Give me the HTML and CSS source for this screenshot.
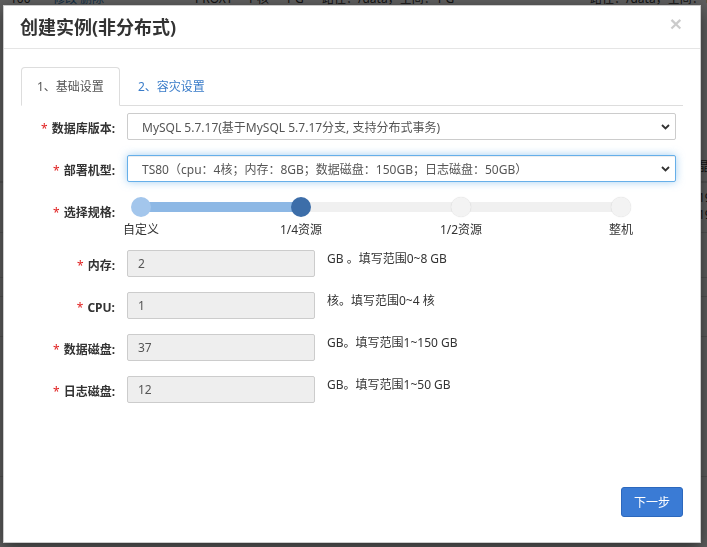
FILE: index.html
```html
<!DOCTYPE html>
<html lang="zh-CN">
<head>
<meta charset="utf-8">
<title>创建实例</title>
<link rel="stylesheet" href="styles.css">
</head>
<body>
<div class="page">
  <div class="bg-row">
    <span></span><span>100</span><span class="bg-link">修改 删除</span><span>PROXY</span><span>1 核</span><span>1 G</span><span>路径：/data，空间：1 G</span><span>路径：/data，空间：1 G</span>
  </div>
  <div class="bg-line bg-a"></div>
  <div class="bg-line bg-b"><span class="bg-edge">晶体</span></div>
  <div class="bg-line bg-c"><span class="bg-edge">192.168</span><span class="bg-edge">192.168</span></div>
  <div class="bg-line bg-d"></div>
  <div class="bg-line bg-e"></div>
  <div class="bg-line bg-f"></div>
  <div class="bg-line bg-g"></div>
</div>
<div class="backdrop"></div>

<div class="modal">
  <div class="modal-header">
    <h4 class="title">创建实例(非分布式)</h4>
    <span class="close">×</span>
  </div>
  <div class="modal-body">
    <ul class="tabs">
      <li class="tab active">1、基础设置</li>
      <li class="tab">2、容灾设置</li>
    </ul>
    <div class="form">
      <div class="row">
        <label class="label"><span class="req">*</span>数据库版本:</label>
        <div class="select">
          <span class="select-text">MySQL 5.7.17(基于MySQL 5.7.17分支, 支持分布式事务)</span>
          <svg class="chev" width="9" height="6" viewBox="0 0 9 6"><path d="M1 1 L4.5 4.5 L8 1" fill="none" stroke="#333" stroke-width="1.8"/></svg>
        </div>
      </div>
      <div class="row">
        <label class="label"><span class="req">*</span>部署机型:</label>
        <div class="select focus">
          <span class="select-text">TS80（cpu：4核；内存：8GB；数据磁盘：150GB；日志磁盘：50GB）</span>
          <svg class="chev" width="9" height="6" viewBox="0 0 9 6"><path d="M1 1 L4.5 4.5 L8 1" fill="none" stroke="#333" stroke-width="1.8"/></svg>
        </div>
      </div>
      <div class="row row-slider">
        <label class="label"><span class="req">*</span>选择规格:</label>
        <div class="slider">
          <div class="track"><div class="fill" style="width:33.333%"></div></div>
          <div class="handles">
            <span class="handle done"></span>
            <span class="handle current"></span>
            <span class="handle"></span>
            <span class="handle"></span>
          </div>
          <div class="ticks">
            <span class="tick">自定义</span>
            <span class="tick">1/4资源</span>
            <span class="tick">1/2资源</span>
            <span class="tick">整机</span>
          </div>
        </div>
      </div>
      <div class="row">
        <label class="label"><span class="req">*</span>内存:</label>
        <input class="input" value="2" readonly>
        <span class="hint">GB 。填写范围0~8 GB</span>
      </div>
      <div class="row">
        <label class="label"><span class="req">*</span>CPU:</label>
        <input class="input" value="1" readonly>
        <span class="hint">核。填写范围0~4 核</span>
      </div>
      <div class="row">
        <label class="label"><span class="req">*</span>数据磁盘:</label>
        <input class="input" value="37" readonly>
        <span class="hint">GB。填写范围1~150 GB</span>
      </div>
      <div class="row">
        <label class="label"><span class="req">*</span>日志磁盘:</label>
        <input class="input" value="12" readonly>
        <span class="hint">GB。填写范围1~50 GB</span>
      </div>
    </div>
  </div>
  <div class="modal-footer">
    <button class="btn" type="button">下一步</button>
  </div>
</div>
</body>
</html>
```
FILE: styles.css
```css
* { box-sizing: border-box; }
html, body { margin: 0; height: 100%; }
body {
  font-family: "Noto Sans", "Noto Sans CJK SC", sans-serif;
  font-size: 12px;
  color: #333;
  background: #fff;
  overflow: hidden;
}

/* background page behind the dialog */
.page { color: #333; }
.bg-row {
  display: grid;
  grid-template-columns: 10px 43px 142px 52px 38px 37px 268px 1fr;
  line-height: 17px;
  height: 17px;
  margin-top: -10px;
  white-space: nowrap;
}
.bg-link { color: #337ab7; }
.bg-line { border-bottom: 1px solid #ddd; position: relative; }
.bg-a { height: 175px; }
.bg-b { height: 25px; padding-top: 0; }
.bg-c { height: 50px; padding-top: 6px; }
.bg-d { height: 45px; }
.bg-e { height: 19px; }
.bg-f { height: 40px; }
.bg-g { height: 140px; }
.bg-edge { display: block; padding-left: 698px; line-height: 17px; white-space: nowrap; }
.bg-b .bg-edge { margin-top: -24px; }

.backdrop {
  position: fixed;
  inset: 0;
  background: rgba(0, 0, 0, 0.63);
}

/* dialog */
.modal {
  position: fixed;
  left: 3px;
  top: 5px;
  width: 698px;
  height: 538px;
  background: #fff;
  border: 1px solid rgba(0, 0, 0, 0.2);
  box-shadow: 0 5px 15px rgba(0, 0, 0, 0.5);
  display: flex;
  flex-direction: column;
}
.modal-header {
  height: 43px;
  border-bottom: 1px solid #e5e5e5;
  display: flex;
  align-items: center;
  padding: 0 18px 0 16px;
  flex: none;
}
.title {
  margin: 0;
  font-size: 18px;
  font-weight: 700;
  line-height: 20px;
  color: #333;
}
.close {
  margin-left: auto;
  align-self: flex-start;
  margin-top: 7px;
  font-family: "Liberation Sans", sans-serif;
  font-size: 21px;
  font-weight: 700;
  line-height: 21px;
  color: #000;
  opacity: 0.2;
}

.modal-body { flex: 1; padding: 18px 17px 0; }

.tabs {
  display: flex;
  list-style: none;
  margin: 0;
  padding: 0;
  border-bottom: 1px solid #ddd;
}
.tab {
  padding: 10px 15px;
  line-height: 17px;
  border: 1px solid transparent;
  border-radius: 4px 4px 0 0;
  margin-right: 2px;
  margin-bottom: -1px;
  color: #3a7cc9;
}
.tab.active {
  color: #555;
  background: #fff;
  border-color: #ddd #ddd transparent;
}

.form { margin-top: 7px; }
.row { display: flex; margin-bottom: 15px; }
.row-slider { margin-bottom: 12px; }
.label {
  width: 94px;
  flex: none;
  text-align: right;
  padding-top: 7px;
  line-height: 17px;
  font-weight: 700;
  margin-right: 12px;
  white-space: nowrap;
}
.req { color: #e02020; font-weight: 400; margin-right: 4px; }

.select {
  flex: 1;
  margin-right: 7px;
  height: 27px;
  border: 1px solid #ccc;
  border-radius: 2px;
  display: flex;
  align-items: center;
  padding: 0 5px 0 14px;
  color: #555;
  background: #fff;
}
.select.focus {
  border-color: #66afe9;
  box-shadow: inset 0 1px 1px rgba(0, 0, 0, 0.075), 0 0 8px rgba(102, 175, 233, 0.6);
}
.select-text { flex: 1; white-space: nowrap; overflow: hidden; }
.chev { flex: none; }

/* slider */
.slider {
  flex: none;
  width: 508px;
  position: relative;
  padding: 0 4px;
}
.track {
  position: absolute;
  left: 14px;
  right: 14px;
  top: 5px;
  height: 10px;
  background: #f0f0f0;
  border-radius: 5px;
}
.fill {
  position: absolute;
  left: 0;
  top: 0;
  bottom: 0;
  background: #8db8e5;
  border-radius: 5px;
}
.handles {
  position: relative;
  display: flex;
  justify-content: space-between;
  height: 20px;
}
.handle {
  width: 20px;
  height: 20px;
  border-radius: 50%;
  background: #f3f3f3;
  box-shadow: 0 0 1px rgba(0, 0, 0, 0.2);
}
.handle.done { background: #a3c6ec; box-shadow: none; }
.handle.current { background: #3d6ea9; box-shadow: none; }
.ticks {
  display: flex;
  justify-content: space-between;
  margin-top: 4px;
  line-height: 17px;
}
.tick {
  width: 20px;
  display: flex;
  justify-content: center;
  white-space: nowrap;
}

/* inputs */
.input {
  width: 188px;
  height: 27px;
  flex: none;
  border: 1px solid #ccc;
  border-radius: 2px;
  background: #eee;
  padding: 0 10px;
  color: #555;
  font: inherit;
  outline: none;
  margin: 0;
}
.hint { margin-left: 12px; line-height: 17px; white-space: nowrap; }

.modal-footer {
  display: flex;
  justify-content: flex-end;
  padding: 0 17px 25px;
  flex: none;
}
.btn {
  width: 62px;
  height: 30px;
  background: #3a7bd5;
  border: 1px solid #2c68bd;
  border-radius: 3px;
  color: #fff;
  font: inherit;
  padding: 0;
}
```
